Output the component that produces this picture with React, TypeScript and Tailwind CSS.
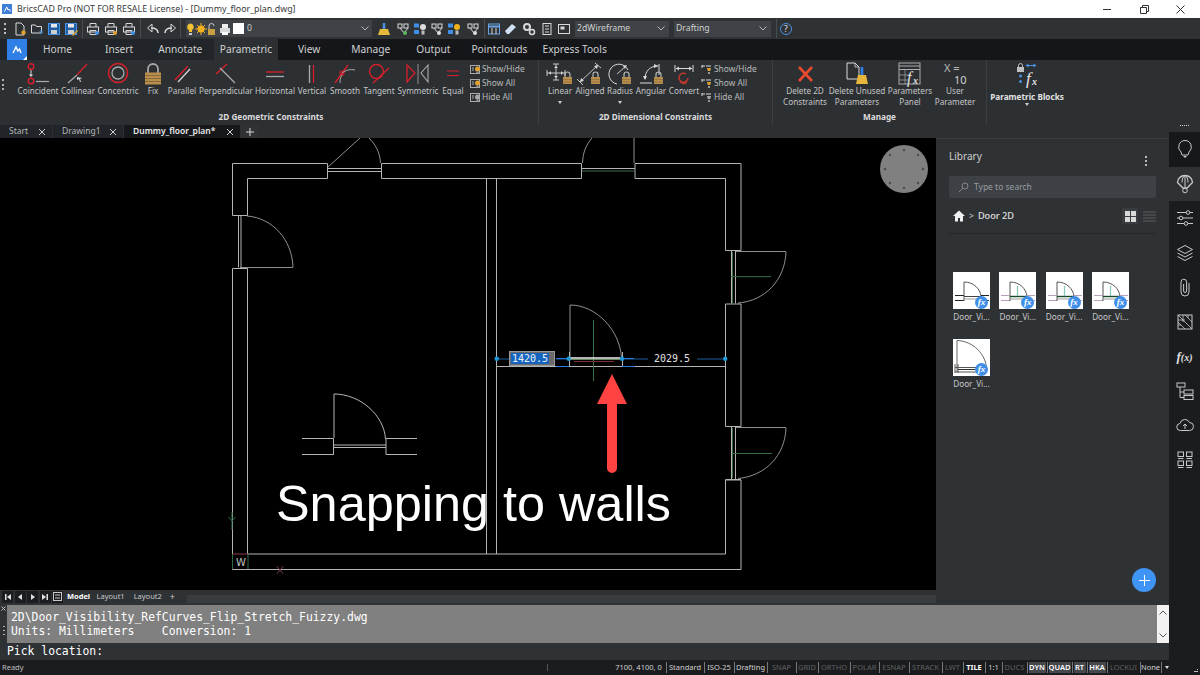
import React from "react";

const G = "#a9abad";
const R = "#d5202b";
const L = "#d9d9d9";

function Sv({ w = 32, h = 24, children, className = "" }: { w?: number; h?: number; children: React.ReactNode; className?: string }) {
  return (
    <svg width={w} height={h} viewBox={`0 0 ${w} ${h}`} fill="none" className={"block shrink-0 overflow-visible " + className}>
      {children}
    </svg>
  );
}

function MiniLock({ x, y }: { x: number; y: number }) {
  return (
    <g>
      <path d={`M${x + 2} ${y + 5}v-2.5a2.5 2.5 0 0 1 5 0v2.5`} stroke="#b9b9b9" strokeWidth="1.2" />
      <rect x={x} y={y + 5} width="9" height="7" fill="#b98d4c" />
      <path d={`M${x} ${y + 7.5}h9M${x} ${y + 10}h9`} stroke="#8a6a38" strokeWidth=".6" />
    </g>
  );
}

const ribbonIcons: Record<string, React.ReactNode> = {
  Coincident: (
    <Sv>
      <circle cx="9" cy="4.5" r="2.8" stroke={R} strokeWidth="1.4" />
      <circle cx="9" cy="19" r="2.8" stroke={R} strokeWidth="1.4" />
      <path d="M9 8v5" stroke={L} />
      <path d="M7 12.5h4l-2 2.5z" fill={L} />
      <path d="M14 19.5h13" stroke={G} strokeWidth="1.2" />
    </Sv>
  ),
  Collinear: (
    <Sv>
      <path d="M25 2 15 13" stroke={R} strokeWidth="1.3" />
      <path d="M15 13 6 21" stroke={G} strokeWidth="1.2" />
      <path d="m15 15 5 1-2 1 1 3-1 0-1-3-2 1z" fill={L} />
    </Sv>
  ),
  Concentric: (
    <Sv>
      <circle cx="16" cy="11" r="9.5" stroke={R} strokeWidth="1.6" />
      <circle cx="16" cy="11" r="6" stroke={G} strokeWidth="1.3" />
    </Sv>
  ),
  Fix: (
    <Sv>
      <path d="M11 11V7a5 5 0 0 1 10 0v4" stroke="#a6a6a6" strokeWidth="1.8" />
      <rect x="8" y="10.5" width="16" height="12" fill="#b98d4c" />
      <path d="M8 13.5h16M8 16.5h16M8 19.5h16" stroke="#7b5f33" strokeWidth=".8" />
    </Sv>
  ),
  Parallel: (
    <Sv>
      <path d="M22 4 9 18" stroke={R} strokeWidth="1.4" />
      <path d="M24 7 12 20" stroke={L} strokeWidth="1.2" />
    </Sv>
  ),
  Perpendicular: (
    <Sv>
      <path d="M17 2 6 12" stroke={R} strokeWidth="1.4" />
      <path d="m10 6 15 15" stroke={G} strokeWidth="1.2" />
    </Sv>
  ),
  Horizontal: (
    <Sv>
      <path d="M7 10h18" stroke={R} strokeWidth="1.3" />
      <path d="M7 14.5h18" stroke={G} strokeWidth="1.3" />
    </Sv>
  ),
  Vertical: (
    <Sv>
      <path d="M13.5 3v18" stroke={G} strokeWidth="1.3" />
      <path d="M17.5 3v18" stroke={R} strokeWidth="1.3" />
    </Sv>
  ),
  Smooth: (
    <Sv>
      <path d="M19 3 6 21" stroke={R} strokeWidth="1.3" />
      <circle cx="13" cy="11" r="2" stroke={R} strokeWidth="1.2" />
      <path d="M13 11c4-3 8-4 13-3" stroke={G} />
      <path d="M13 13c-2 3-2 6-2 8" stroke={G} />
    </Sv>
  ),
  Tangent: (
    <Sv>
      <circle cx="13.5" cy="9.5" r="7" stroke={R} strokeWidth="1.4" />
      <path d="M26 6 10 21" stroke={R} strokeWidth="1.3" />
    </Sv>
  ),
  Symmetric: (
    <Sv>
      <path d="M5 3 13 11 5 20z" stroke={R} strokeWidth="1.3" />
      <path d="M16 2v20" stroke={G} strokeWidth=".8" />
      <path d="M26 3 19 11 26 20z" stroke={G} strokeWidth="1.1" />
    </Sv>
  ),
  Equal: (
    <Sv>
      <path d="M10 9h12M10 13.5h12" stroke={R} strokeWidth="1.1" />
    </Sv>
  ),
  Linear: (
    <Sv>
      <path d="M3 11h18M12 2v16M9 2h6M9 18h6M3 8v6M21 8v6" stroke={L} strokeWidth=".9" />
      <path d="M12 4l-2 2h4zM12 16l-2-2h4zM5 11l2-2v4zM19 11l-2-2v4z" fill={L} />
      <MiniLock x={19} y={10} />
    </Sv>
  ),
  Aligned: (
    <Sv>
      <path d="M6 20 24 3M3 17l6 6M21 1l6 5" stroke={L} strokeWidth=".9" />
      <path d="m6 20 4-1-3-3zM24 3l-4 1 3 3z" fill={L} />
      <MiniLock x={17} y={10} />
    </Sv>
  ),
  Radius: (
    <Sv>
      <path d="M13 22A10 10 0 1 1 24 8" stroke={L} strokeWidth="1" />
      <path d="m13 12 9-8" stroke={L} strokeWidth=".9" />
      <path d="m23 3-4 1 2 3z" fill={L} />
      <MiniLock x={18} y={10} />
    </Sv>
  ),
  Angular: (
    <Sv>
      <path d="M5 21h12M24 2v11" stroke={L} strokeWidth="1" />
      <path d="M10 17C10 9 15 4 23 4" stroke={L} strokeWidth="1" />
      <path d="m10 18-2-4h4zM23 4l-4-2v4z" fill={L} />
      <MiniLock x={19} y={10} />
    </Sv>
  ),
  Convert: (
    <Sv>
      <path d="M7 3v7M25 3v7M8 6.5h16" stroke={L} strokeWidth="1" />
      <path d="m8 6.5 3-2v4zM24 6.5l-3-2v4z" fill={L} />
      <path d="M20 16a4.5 4.5 0 1 1-2-4" stroke="#c8392e" strokeWidth="1.4" />
      <path d="M12 19a4 4 0 0 0 7 1" stroke="#c8392e" strokeWidth="1.2" />
    </Sv>
  ),
  "Delete 2D": (
    <Sv>
      <path d="m10 5 13 14M23 5 10 19" stroke="#e8492f" strokeWidth="2.6" />
    </Sv>
  ),
  "Delete Unused": (
    <Sv>
      <path d="M6 1h8l4 4v12H6z" stroke={L} strokeWidth="1" />
      <path d="M14 1v4h4" stroke={L} strokeWidth=".8" />
      <path d="M21 5v8" stroke="#2f7fe6" strokeWidth="2.6" />
      <path d="M17 13h8l2 9H15z" fill="#e6b73d" />
    </Sv>
  ),
  Parameters: (
    <Sv>
      <rect x="5" y="1" width="21" height="21" stroke={G} />
      <path d="M5 4h21M5 7.5h21" stroke={G} />
      <path d="M5 13h12M5 18h10M11 8v14" stroke={G} strokeWidth=".7" />
      <text x="13" y="21" fill="#e0e0e0" fontFamily="Liberation Serif" fontStyle="italic" fontSize="16">f</text>
      <text x="19" y="22" fill="#e0e0e0" fontFamily="Liberation Serif" fontStyle="italic" fontWeight="700" fontSize="10">x</text>
    </Sv>
  ),
  User: (
    <Sv>
      <text x="5" y="10" fill="#b8b8b8" fontFamily="Noto Sans" fontSize="11">X =</text>
      <text x="15" y="22" fill="#d0d0d0" fontFamily="Noto Sans" fontSize="11">10</text>
    </Sv>
  ),
  Blocks: (
    <Sv>
      <rect x="6" y="5" width="7" height="5" fill="#c0c0c0" />
      <path d="M7.5 5V3.5a2 2 0 0 1 4 0V5" stroke="#c0c0c0" />
      <path d="M16 3.5h8" stroke="#4a90e2" strokeWidth="1" />
      <path d="m14.5 3.5 3-2v4zM25.5 3.5l-3-2v4z" fill="#4a90e2" />
      <circle cx="9.5" cy="14" r="1.5" fill="#4a90e2" />
      <circle cx="9.5" cy="19.5" r="1.5" fill="#4a90e2" />
      <text x="15" y="22" fill="#e6e6e6" fontFamily="Liberation Serif" fontStyle="italic" fontSize="17">f</text>
      <text x="21" y="23" fill="#e6e6e6" fontFamily="Liberation Serif" fontStyle="italic" fontWeight="700" fontSize="10">x</text>
    </Sv>
  ),
};

function RItem({ k, w, lines, caret }: { k: string; w: string; lines: string[]; caret?: boolean }) {
  return (
    <div className={"flex flex-col items-center pt-[2px] " + w}>
      {ribbonIcons[k]}
      <div className="-mt-px flex flex-col items-center text-[8.2px] leading-[11.4px] text-[#c4c5c6] whitespace-nowrap">
        {lines.map((l) => (
          <span key={l}>{l}</span>
        ))}
      </div>
      {caret && <span className="mt-[5px] h-0 w-0 border-x-[2.5px] border-t-[3px] border-x-transparent border-t-[#d0d0d0]" />}
    </div>
  );
}

function SmallRow({ label, dim, on = true }: { label: string; dim?: boolean; on?: boolean }) {
  return (
    <div className="flex h-[14px] items-center">
      <Sv w={11} h={11} className="mr-[1px]">
        {dim ? (
          <>
            <path d="M0 2h3M0 1v3M9 2H4" stroke={L} />
            <path d="M5 4h4l-.8 3H5.800z" fill={on ? "#e0a030" : "#a8a8a8"} />
            <rect x="6" y="8" width="2" height="2" fill="#999" />
          </>
        ) : (
          <>
            <rect x=".5" y="1.500" width="9" height="8" stroke={G} />
            <path d="M2 4h2M2 6h2" stroke={G} />
            <circle cx="7.500" cy="5" r="2.500" fill={on ? "#e0a030" : "#a8a8a8"} />
            <rect x="6.500" y="7.500" width="2" height="2" fill="#999" />
          </>
        )}
      </Sv>
      <span className="text-[8.4px] leading-none text-[#b9babb]">{label}</span>
    </div>
  );
}

function SmallCol({ dim, w }: { dim?: boolean; w: string }) {
  return (
    <div className={"flex flex-col pt-[2px] " + w}>
      <SmallRow label="Show/Hide" dim={dim} />
      <SmallRow label="Show All" dim={dim} />
      <SmallRow label="Hide All" dim={dim} on={false} />
    </div>
  );
}

function PanelTitle({ children }: { children: React.ReactNode }) {
  return <div className="absolute bottom-[3px] left-0 right-0 text-center text-[8.2px] font-bold leading-[11px] text-[#dcdcdc]">{children}</div>;
}

function Tb({ children, cls = "" }: { children: React.ReactNode; cls?: string }) {
  return <span className={"flex h-4 w-4 shrink-0 items-center justify-center " + cls}>{children}</span>;
}

const Sep = ({ cls = "" }: { cls?: string }) => <span className={"h-[19px] w-px shrink-0 bg-[#4a4d50] " + cls} />;

function Printer({ dot = "#3f8fe8" }: { dot?: string }) {
  return (
    <Sv w={14} h={14}>
      <path d="M4 5V1.500h6V5" stroke={L} />
      <rect x="1.500" y="5" width="11" height="5" stroke={L} />
      <path d="M4 8.500h6v4H4z" stroke={L} />
      <circle cx="11" cy="11" r="2" fill={dot} />
    </Sv>
  );
}

const DocIcon = ({ c = "#e0a030" }: { c?: string }) => (
  <Sv w={14} h={14}>
    <path d="M3 1h5l3 3v9H3z" stroke={L} />
    <circle cx="10.500" cy="10.500" r="2.200" fill={c} />
  </Sv>
);

function Save({ y }: { y?: boolean }) {
  return (
    <Sv w={14} h={14}>
      <rect x="1.500" y="1.500" width="11" height="11" fill="#1e5fa8" stroke="#4a90e2" />
      <rect x="4" y="2" width="6" height="3.500" fill="#e8e8e8" />
      <rect x="4" y="8" width="6" height="4" fill="#cfcfcf" />
      {y && <path d="m8 13 5-5 1 1-5 5z" fill="#e0a030" />}
    </Sv>
  );
}

function Chevron() {
  return (
    <svg width="8" height="5" viewBox="0 0 8 5" className="shrink-0" fill="none">
      <path d="m.5.500 3.500 3.500L7.500.500" stroke="#b5b5b5" />
    </svg>
  );
}

function Toolbar() {
  return (
    <div className="flex h-[21px] items-center bg-[#2f3235] pl-[4px]">
      <span className="flex h-[11px] w-[8px] shrink-0 flex-col justify-between">
        <i className="h-[2px] w-[2px] bg-[#c0c0c0]" />
        <i className="h-[2px] w-[2px] bg-[#c0c0c0]" />
        <i className="h-[2px] w-[2px] bg-[#c0c0c0]" />
      </span>
      <Tb><DocIcon /></Tb>
      <Tb cls="ml-px">
        <Sv w={14} h={14}>
          <path d="M1.500 3h4l1 1.500h5V11h-10z" stroke={L} />
          <path d="M9 10h4M11 8v4" stroke="#4a90e2" />
        </Sv>
      </Tb>
      <Tb cls="ml-px"><Save /></Tb>
      <Tb cls="ml-px"><Save y /></Tb>
      <Sep cls="ml-[3px]" />
      <Tb cls="ml-[2px]"><Printer /></Tb>
      <Tb cls="ml-[2px]"><Printer dot="#e0a030" /></Tb>
      <Tb cls="ml-[1.500px]"><Printer /></Tb>
      <Sep cls="ml-[3px]" />
      <Tb cls="ml-[4.500px]">
        <Sv w={14} h={14}>
          <path d="M12 11c0-4-3-5-7-5" stroke={L} strokeWidth="1.500" />
          <path d="M6 2 1.500 6 6 10z" stroke={L} />
        </Sv>
      </Tb>
      <Tb cls="ml-px">
        <Sv w={14} h={14}>
          <path d="M2 11c0-4 3-5 7-5" stroke={L} strokeWidth="1.500" />
          <path d="M8 2l4.500 4L8 10z" stroke={L} />
        </Sv>
      </Tb>
      <Sep cls="ml-[2px]" />
      <div className="ml-[5px] flex h-[17px] w-[186px] shrink-0 items-center bg-[#3f4347] pl-[0px] pr-[3px]">
        <Sv w={46} h={14}>
          <path d="M4 1.500a3.500 3.500 0 0 1 2 6.500v2H3V8a3.500 3.500 0 0 1 1-6.500z" fill="#f2c230" />
          <rect x="3" y="11" width="3" height="2" fill="#ccc" />
          <circle cx="15" cy="7" r="3.500" fill="#f2b01e" />
          <path d="M15 1v12M9 7h12M11 3l8 8M19 3l-8 8" stroke="#f2b01e" />
          <rect x="22" y="7" width="7" height="6" fill="#c8a040" />
          <path d="M23 7V4a2.500 2.500 0 0 1 5 0" stroke="#ccc" />
          <rect x="34" y="6" width="10" height="5" fill="#d8d8d8" />
          <rect x="36" y="2" width="6" height="4" fill="#eee" />
          <rect x="36" y="10" width="6" height="3" fill="#fff" />
        </Sv>
        <span className="ml-px h-[11px] w-[11px] bg-white" />
        <span className="ml-[3px] flex-1 text-[8.500px] leading-none text-[#d0d0d0]">0</span>
        <Chevron />
      </div>
      <Tb cls="ml-[4px]">
        <Sv w={14} h={14}>
          <path d="M7 1v6" stroke="#4a90e2" strokeWidth="2.500" />
          <path d="M3 7h8l2 6H1z" fill="#e6b73d" />
        </Sv>
      </Tb>
      {[0, 1, 2, 3, 4].map((i) => (
        <Tb key={i} cls={i === 0 ? "ml-[3px]" : i === 4 ? "ml-[3px]" : "ml-px"}>
          <Sv w={14} h={14}>
            {i % 2 === 0 ? (
              <>
                <rect x="2" y="2" width="4" height="4" stroke={L} />
                <rect x="8" y="2" width="4" height="4" stroke={L} />
                <path d="M4 6l4 5M12 6l-4 5" stroke={L} />
                <circle cx="9" cy="11" r="2" fill={i === 0 ? "#5cb85c" : "#ddd"} />
              </>
            ) : (
              <>
                <rect x="1" y="1.500" width="5" height="4" fill="#3f8fe8" />
                <rect x="1" y="8" width="5" height="4" fill="#3f8fe8" />
                <circle cx="10" cy="5" r="3" fill={i === 3 ? "#f2b01e" : "#ddd"} />
                <rect x="8.500" y="8.500" width="3" height="4" fill="#bbb" />
              </>
            )}
          </Sv>
        </Tb>
      ))}
      <Sep cls="ml-[3px]" />
      <Tb cls="ml-[1px]">
        <Sv w={14} h={14}>
          <rect x="1.500" y="2" width="11" height="10" stroke="#6aa5e8" />
          <path d="M1.500 4.500h11" stroke="#6aa5e8" strokeWidth="2" />
          <path d="M5 6v6M9 6v6" stroke={L} />
        </Sv>
      </Tb>
      <Tb cls="ml-px">
        <Sv w={14} h={14}>
          <path d="m1 9 7-7 4 3-7 7H3z" fill="#cfe0f0" />
        </Sv>
      </Tb>
      <Tb cls="ml-[2px]">
        <Sv w={14} h={14}>
          <circle cx="5" cy="5" r="3" stroke={L} strokeWidth="2" />
          <circle cx="10" cy="10" r="2.500" stroke={L} strokeWidth="1.500" />
        </Sv>
      </Tb>
      <Tb cls="ml-[2px]">
        <Sv w={14} h={14}>
          <rect x="3" y="1.500" width="8" height="11" stroke={L} />
          <path d="M5 4h4M5 7h4M5 10h4" stroke={L} />
        </Sv>
      </Tb>
      <Tb cls="ml-px">
        <Sv w={14} h={14}>
          <rect x="1.500" y="2.500" width="11" height="9" stroke={L} />
          <rect x="3.500" y="4.500" width="4" height="3" fill={L} />
        </Sv>
      </Tb>
      <div className="ml-[3px] flex h-[16px] w-[94px] shrink-0 items-center justify-between bg-[#3f4347] pl-[2px] pr-[4px] text-[8.700px] text-[#d0d0d0]">
        2dWireframe
        <Chevron />
      </div>
      <div className="ml-[5px] flex h-[16px] w-[97px] shrink-0 items-center justify-between bg-[#3f4347] pl-[2px] pr-[4px] text-[8.700px] text-[#d0d0d0]">
        Drafting
        <Chevron />
      </div>
      <Sep cls="ml-[5px]" />
      <Tb cls="ml-[1px]">
        <Sv w={14} h={14}>
          <circle cx="7" cy="7" r="5.500" stroke="#4a90e2" />
          <text x="5" y="10" fontSize="8.500" fontFamily="Noto Sans" fill="#e0e0e0">?</text>
        </Sv>
      </Tb>
    </div>
  );
}

function TabBar() {
  return (
    <div className="flex h-[21px] items-stretch bg-[#14161a] text-[10.200px] leading-[21px] text-[#cfd0d1]">
      <div className="flex w-[214px] items-stretch bg-[#212428] pl-[7px]">
        <div className="relative flex h-[21px] w-[20px] items-center justify-center bg-[#2f7fe6]">
          <Sv w={10} h={8}>
            <path d="M1 7 4 1l1.800 4L7.500 3 9 7" stroke="#fff" strokeWidth="1.400" />
          </Sv>
          <span className="absolute bottom-0 right-0 h-0 w-0 border-b-[4px] border-l-[4px] border-b-white border-l-transparent" />
        </div>
        <span className="ml-[16px]">Home</span>
        <span className="ml-[33px]">Insert</span>
        <span className="ml-[25px]">Annotate</span>
      </div>
      <span className="w-[64px] bg-[#2d3033] text-center">Parametric</span>
      <span className="ml-[20px]">View</span>
      <span className="ml-[31px]">Manage</span>
      <span className="ml-[26px]">Output</span>
      <span className="ml-[21px]">Pointclouds</span>
      <span className="ml-[15px]">Express Tools</span>
    </div>
  );
}

function Ribbon() {
  return (
    <div className="flex h-[65px] items-stretch bg-[#2d3033]">
      <div className="relative flex w-[539px] shrink-0 border-r border-[#3c3f42] pl-[18px]">
        <span className="absolute left-[2px] top-[19px] flex h-[11px] flex-col justify-between">
          <i className="h-[2px] w-[2px] bg-[#b0b0b0]" />
          <i className="h-[2px] w-[2px] bg-[#b0b0b0]" />
          <i className="h-[2px] w-[2px] bg-[#b0b0b0]" />
        </span>
        <RItem k="Coincident" w="w-[40px]" lines={["Coincident"]} />
        <RItem k="Collinear" w="w-[40px]" lines={["Collinear"]} />
        <RItem k="Concentric" w="w-[40px]" lines={["Concentric"]} />
        <RItem k="Fix" w="w-[30px]" lines={["Fix"]} />
        <RItem k="Parallel" w="w-[28px]" lines={["Parallel"]} />
        <RItem k="Perpendicular" w="w-[60px]" lines={["Perpendicular"]} />
        <RItem k="Horizontal" w="w-[38px]" lines={["Horizontal"]} />
        <RItem k="Vertical" w="w-[36px]" lines={["Vertical"]} />
        <RItem k="Smooth" w="w-[30px]" lines={["Smooth"]} />
        <RItem k="Tangent" w="w-[38px]" lines={["Tangent"]} />
        <RItem k="Symmetric" w="w-[40px]" lines={["Symmetric"]} />
        <RItem k="Equal" w="w-[30px]" lines={["Equal"]} />
        <div className="ml-[2px]"><SmallCol w="w-[60px]" /></div>
        <PanelTitle><span className="relative left-[2px]">2D Geometric Constraints</span></PanelTitle>
      </div>
      <div className="relative flex w-[234px] shrink-0 border-r border-[#3c3f42] pl-[5px]">
        <RItem k="Linear" w="w-[32px]" lines={["Linear"]} caret />
        <RItem k="Aligned" w="w-[28px]" lines={["Aligned"]} />
        <RItem k="Radius" w="w-[32px]" lines={["Radius"]} caret />
        <RItem k="Angular" w="w-[30px]" lines={["Angular"]} />
        <RItem k="Convert" w="w-[36px]" lines={["Convert"]} />
        <SmallCol dim w="w-[60px]" />
        <PanelTitle>2D Dimensional Constraints</PanelTitle>
      </div>
      <div className="relative flex w-[214px] shrink-0 border-r border-[#3c3f42] pl-[9px]">
        <RItem k="Delete 2D" w="w-[46px]" lines={["Delete 2D", "Constraints"]} />
        <RItem k="Delete Unused" w="w-[58px]" lines={["Delete Unused", "Parameters"]} />
        <RItem k="Parameters" w="w-[48px]" lines={["Parameters", "Panel"]} />
        <RItem k="User" w="w-[42px]" lines={["User", "Parameter"]} />
        <PanelTitle>Manage</PanelTitle>
      </div>
      <div className="flex w-[80px] flex-col items-center pt-[2px]">
        {ribbonIcons.Blocks}
        <span className="mt-[5px] whitespace-nowrap text-[8.200px] font-bold leading-[11px] text-[#e2e2e2]">Parametric Blocks</span>
        <span className="mt-[1px] h-0 w-0 border-x-[2.500px] border-t-[3px] border-x-transparent border-t-[#d0d0d0]" />
      </div>
    </div>
  );
}

function DocTab({ label, active, w }: { label: string; active?: boolean; w: string }) {
  return (
    <div className={"flex h-[13px] items-center justify-between pl-[9px] pr-[6px] " + w + (active ? " bg-[#17181b] font-semibold text-[#e8e8e8]" : " bg-[#212428] text-[#b5b6b7]")}>
      <span>{label}</span>
      <svg width="8" height="8" viewBox="0 0 8 8" fill="none">
        <path d="m1 1 6 6M7 1 1 7" stroke="#d0d0d0" />
      </svg>
    </div>
  );
}

function DocTabs() {
  return (
    <div className="flex h-[13px] items-stretch gap-px bg-[#2d3033] text-[8.500px] leading-none">
      <DocTab label="Start" w="w-[52px]" />
      <DocTab label="Drawing1" w="w-[70px]" />
      <DocTab label="Dummy_floor_plan*" w="w-[116px]" active />
      <div className="flex w-[18px] items-center justify-center bg-[#303336]">
        <svg width="8" height="8" viewBox="0 0 8 8" fill="none">
          <path d="M4 0v8M0 4h8" stroke="#d8d8d8" />
        </svg>
      </div>
    </div>
  );
}

function Drawing() {
  const W = "#b4b4b4";
  return (
    <svg viewBox="0 138 936 452" className="block h-full w-full" fill="none">
      <g stroke={W} strokeWidth="1">
        {/* top-left wall */}
        <path d="M232.500 215.500V163.500H327.500V178.500H247.500V215.500H232.500" />
        {/* top door */}
        <path d="M328 168.500H381M328 171.500H381" />
        <path d="M328 167 360 138M369 138C375 144 380 152 380.500 163" strokeWidth=".8" />
        <path d="M581.500 163.500H381.500V178.500H581.500V163.500" />
        <path d="M635 163.500H741V250.500H725.500V178.500H635V163.500" />
        {/* upper door */}
        <path d="M582 168.500H635" />
        <path d="M634 163V138M582.500 163C583 152 586 145 592 138" strokeWidth=".8" />
        {/* left door */}
        <path d="M238.500 215.500V267.500M241 215.500V267.500" />
        <path d="M240 267.500H293M247 216C273 218 292 240 293 267" strokeWidth=".8" />
        {/* left lower wall */}
        <path d="M232.500 268.500V569.500H741V480H725.500V554H247.500V268.500H232.500" />
        {/* interior */}
        <path d="M486.500 178.500V554M496.500 178.500V554" />
        {/* right door 1 */}
        <path d="M731.500 251V303.500M735.500 251V303.500" />
        <path d="M735 251.500H786M786 252C785 280 765 301 738 303" strokeWidth=".8" />
        <path d="M725.500 304V426.500H741V304H725.500" />
        {/* right door 2 */}
        <path d="M731.500 427V479M735.500 427V479" />
        <path d="M735 427.500H786M786 428C785 456 765 476 738 478.500" strokeWidth=".8" />
        <path d="M725.500 479.500H741" />
        {/* center partition */}
        <path d="M497 366.500H725.500" />
        {/* placed door */}
        <path d="M570 358V305C596 305 620 330 621.500 358" strokeWidth=".8" />
        <path d="M569.500 352V366M622.500 352V366" />
        {/* lower-left door */}
        <path d="M334 438V394C360 394 384 415 385.500 439" />
        <path d="M302 438.500H333.500V454.500H302M417 438.500H386V454.500H417M333 445H386M333 447.500H386" />
      </g>
      <g stroke="#3a7048">
        <path d="M732.500 252V303M731 276.700H771M732.500 428V478M732 453.500H772" />
        <path d="M593.500 320V381" />
        <path d="M582 171H634" />
      </g>
      <path d="M570 358H620" stroke="#f2f2f2" strokeWidth="1.600" />
      <path d="M570 359.500H620" stroke="#7fb07f" strokeWidth=".8" />
      <path d="M574 361.500H614" stroke="#7a3030" />
      {/* dim lines */}
      <g stroke="#1f5f9c" strokeWidth="1">
        <path d="M497 359H509M556 359H569M622 359H648M697 359H725" />
      </g>
      <path d="M556 358.500H569M556 366.500H569M622 366.500H635M622 358.500H634" stroke="#2a7ae2" strokeWidth="1" />
      <g fill="#1d9bd8">
        <circle cx="496.700" cy="358.700" r="2.200" />
        <circle cx="568.700" cy="358.700" r="2.200" />
        <circle cx="622" cy="358.700" r="2.200" />
        <circle cx="725.200" cy="358.700" r="2.200" />
      </g>
      {/* UCS */}
      <path d="M232 530V512M228.500 517 232 521 235.500 517" stroke="#2f6a48" />
      <path d="M232.500 554H248" stroke="#8a3a4a" />
      <path d="M232.500 554V569M248 554V569" stroke="#2f6a48" />
      <text x="236" y="566" fontFamily="DejaVu Sans" fontSize="10" fill="#c0c0c0">W</text>
      <path d="m276.500 566 7 8M283.500 566l-7 8" stroke="#7a3a4a" />
      {/* arrow */}
      <path d="M612 374 627 404H617V468a5 5 0 0 1-10 0V404H597Z" fill="#ff4343" />
      {/* nav wheel */}
      <circle cx="904" cy="169" r="24" fill="#808080" />
      <g fill="#4a4a4a">
        <circle cx="904" cy="150" r="1.200" />
        <circle cx="918" cy="155" r="1.200" />
        <circle cx="923" cy="169" r="1.200" />
        <circle cx="918" cy="183" r="1.200" />
        <circle cx="904" cy="188" r="1.200" />
        <circle cx="890" cy="183" r="1.200" />
        <circle cx="885" cy="169" r="1.200" />
        <circle cx="890" cy="155" r="1.200" />
      </g>
    </svg>
  );
}

function Canvas() {
  return (
    <div className="relative min-h-0 flex-1 overflow-hidden bg-black">
      <Drawing />
      <div className="absolute left-[509px] top-[213px] flex h-[15px] w-[46px] items-center border border-[#9a9a9a] bg-[#6a6a6a] pl-px">
        <span className="flex h-[11px] w-[38px] items-center justify-center bg-[#1565c0] font-['DejaVu_Sans_Mono',monospace] text-[10px] leading-none text-[#f0f0f0]">1420.5</span>
      </div>
      <span className="absolute left-[654px] top-[214px] font-['DejaVu_Sans_Mono',monospace] text-[10px] leading-[13px] text-[#e0e0e0]">2029.5</span>
      <span className="absolute left-[276px] top-[337px] whitespace-nowrap font-['Liberation_Sans',sans-serif] text-[50.400px] leading-[58px] text-white">Snapping to walls</span>
    </div>
  );
}

function NavBtn({ d }: { d: string }) {
  return (
    <span className="flex h-[12px] w-[11px] items-center justify-center bg-[#1c1d20]">
      <svg width="8" height="8" viewBox="0 0 8 8" fill="#e0e0e0">
        <path d={d} />
      </svg>
    </span>
  );
}

function LayoutTabs() {
  return (
    <div className="flex h-[13px] shrink-0 items-center bg-[#2f3235] pl-[2px] text-[7.500px] leading-none text-[#c8c8c8]">
      <div className="flex gap-[1.500px]">
        <NavBtn d="M1 1h1.500v6H1zM7 1v6L3 4z" />
        <NavBtn d="M6 1v6L2 4z" />
        <NavBtn d="M2 1v6l4-3z" />
        <NavBtn d="M1 1v6l4-3zM5.500 1H7v6H5.500z" />
      </div>
      <span className="ml-px flex h-[12px] w-[11px] items-center justify-center bg-[#1c1d20]">
        <svg width="9" height="9" viewBox="0 0 9 9" fill="none">
          <rect x=".5" y=".5" width="8" height="8" stroke="#c8c8c8" />
          <path d="M2 3h5M2 6h5" stroke="#c8c8c8" />
        </svg>
      </span>
      <span className="ml-[4px] w-[24px] text-center font-bold text-white">Model</span>
      <span className="ml-[6px]">Layout1</span>
      <span className="ml-[9px]">Layout2</span>
      <span className="ml-[8px] text-[9px]">+</span>
      <div className="ml-[12px] h-[8px] flex-1 self-end bg-[#3a3d40]" />
    </div>
  );
}

function Command() {
  return (
    <div className="flex h-[57px] items-stretch bg-[#2f3235]">
      <div className="flex w-[7px] shrink-0 flex-col items-center pt-[3px]">
        <svg width="5" height="5" viewBox="0 0 5 5" fill="none">
          <path d="m.5.5 4 4M4.500.5l-4 4" stroke="#c0c0c0" />
        </svg>
        <span className="mt-[15px] flex h-[9px] flex-col justify-between">
          <i className="h-px w-[2px] bg-[#b0b0b0]" />
          <i className="h-px w-[2px] bg-[#b0b0b0]" />
          <i className="h-px w-[2px] bg-[#b0b0b0]" />
        </span>
      </div>
      <div className="flex flex-1 flex-col">
        <div className="mt-[2px] flex h-[38px] items-stretch">
          <div className="flex-1 bg-[#808080] pl-[4px] pt-[5px] font-['DejaVu_Sans_Mono',monospace] text-[11.400px] leading-[14.300px] text-white">
            <div>2D\Door_Visibility_RefCurves_Flip_Stretch_Fuizzy.dwg</div>
            <div className="whitespace-pre">Units: Millimeters    Conversion: 1</div>
          </div>
          <div className="flex w-[12px] flex-col items-center justify-between bg-[#f2f2f2] py-[5px]">
            <svg width="8" height="5" viewBox="0 0 8 5" fill="none">
              <path d="m.5 4.500 3.500-3.500L7.500 4.500" stroke="#555" />
            </svg>
            <svg width="8" height="5" viewBox="0 0 8 5" fill="none">
              <path d="m.5.5 3.500 3.500L7.500.5" stroke="#555" />
            </svg>
          </div>
        </div>
        <div className="-ml-[7px] flex flex-1 items-center pl-[7px] font-['DejaVu_Sans_Mono',monospace] text-[11.400px] leading-none text-white">Pick location:</div>
      </div>
    </div>
  );
}

function Thumb({ big, line = "#222", tint, label = "Door_Vi..." }: { big?: boolean; line?: string; tint?: boolean; label?: string }) {
  return (
    <div className="flex w-[37px] flex-col items-center">
      <div className="relative h-[37px] w-[37px] bg-white">
        {big ? (
          <svg viewBox="0 0 37 37" className="h-full w-full" fill="none">
            <path d="M4 33V1.500C20 2 33 15 33.500 30" stroke="#666" />
            <path d="M2 28.500H34M2 33H34M2 25v9M5 25v9" stroke="#555" />
            <path d="M5 30.500H33" stroke="#333" />
          </svg>
        ) : (
          <svg viewBox="0 0 37 37" className="h-full w-full" fill="none">
            <path d="M11 24V10C21 10 27 17 28 24" stroke="#555" />
            <path d="M2 23.500H11M28 23.500H36M2 28.500H11M28 28.500H36" stroke={tint ? "#b8a0b8" : line} />
            <path d="M11 24V29M28 24V29" stroke="#555" />
            <path d="M11 24.500H28" stroke={tint ? "#164a28" : "#444"} strokeWidth={tint ? 1.400 : 1} />
            {tint && <path d="M18.500 14V24" stroke="#88c8b8" strokeWidth="1.300" />}
            <path d="M11 27H28" stroke="#999" />
          </svg>
        )}
        <span className="absolute bottom-0 right-[2px] flex h-[13px] w-[13px] items-center justify-center rounded-full bg-[#3f8fe8] font-['Liberation_Serif',serif] text-[9px] font-bold italic leading-none text-white">
          fx
        </span>
      </div>
      <span className="mt-[2px] whitespace-nowrap text-[8.200px] leading-[12px] text-[#c8c8c8]">{label}</span>
    </div>
  );
}

function Library() {
  return (
    <div className="relative flex w-[233px] shrink-0 flex-col border-t border-[#3a3d40] bg-[#2f3235] pl-[13px] pr-[13px]">
      <div className="flex h-[37px] items-center justify-between pb-[2px]">
        <span className="text-[10px] text-[#cfcfcf]">Library</span>
        <span className="mr-[9px] mt-[8px] flex flex-col gap-[2px]">
          <i className="h-[2px] w-[2px] rounded-full bg-[#e8e8e8]" />
          <i className="h-[2px] w-[2px] rounded-full bg-[#e8e8e8]" />
          <i className="h-[2px] w-[2px] rounded-full bg-[#e8e8e8]" />
        </span>
      </div>
      <div className="flex h-[22px] items-center rounded-[2px] bg-[#3d4146] pl-[9px] text-[8.500px] text-[#9a9da0]">
        <svg width="11" height="11" viewBox="0 0 11 11" fill="none" className="mr-[5px]">
          <circle cx="7" cy="4" r="3" stroke="#85888b" />
          <path d="M4.800 6.200 1 10" stroke="#85888b" />
        </svg>
        Type to search
      </div>
      <div className="flex h-[36px] items-center border-b border-[#26282a] pl-[4px] pt-[1px]">
        <svg width="12" height="12" viewBox="0 0 12 12">
          <path d="M6 .5 0 6h2v5.500h3V8h2v3.500h3V6h2z" fill="#f0f0f0" />
        </svg>
        <span className="ml-[4px] text-[8.500px] text-[#d0d0d0]">&gt;</span>
        <span className="ml-[4px] text-[9.200px] font-medium text-[#e0e0e0]">Door 2D</span>
        <span className="ml-auto mr-[2px] flex h-[16px] w-[16px] items-center justify-center bg-[#383b3f]">
          <svg width="11" height="11" viewBox="0 0 11 11" fill="#d8d8d8">
            <rect width="5" height="5" />
            <rect x="6" width="5" height="5" />
            <rect y="6" width="5" height="5" />
            <rect x="6" y="6" width="5" height="5" />
          </svg>
        </span>
        <svg width="13" height="11" viewBox="0 0 13 11" fill="none" className="ml-[3px]">
          <path d="M0 1h13M0 4h13M0 7h13M0 10h13" stroke="#5c5f62" />
        </svg>
      </div>
      <div className="mt-[38px] grid w-[190px] grid-cols-[37px_37px_37px_37px] gap-x-[9.300px] gap-y-[16px] pl-[4px]">
        <Thumb />
        <Thumb tint />
        <Thumb tint />
        <Thumb tint />
        <Thumb big />
      </div>
      <span className="absolute left-[196px] top-[429px] flex h-6 w-6 items-center justify-center rounded-full bg-[#3f94f5]">
        <svg width="11" height="11" viewBox="0 0 11 11" fill="none">
          <path d="M5.500 0v11M0 5.500h11" stroke="#fff" />
        </svg>
      </span>
    </div>
  );
}

function SI({ children, active, dark }: { children: React.ReactNode; active?: boolean; dark?: boolean }) {
  return (
    <div className={"flex h-[34.500px] w-full items-center justify-center " + (active ? "bg-[#2f3235]" : dark ? "bg-[#17181a]" : "")}>
      {children}
    </div>
  );
}

function RightStrip() {
  const s = { stroke: "#c8c8c8", strokeWidth: 1 };
  return (
    <div className="flex w-[31px] shrink-0 flex-col bg-[#1b1c1e]">
      <div className="flex h-[7px] items-start justify-center bg-[#2d3033] text-[0px]">
        <i className="h-px w-[9px] border-t border-dotted border-[#d0d0d0]" />
      </div>
      <SI dark>
        <Sv w={18} h={20}>
          <path d="M9 1.500a6.500 6.500 0 0 1 4 11.500l-1 3H6l-1-3A6.500 6.500 0 0 1 9 1.500z" {...s} />
          <path d="M7 17h4l-2 2z" fill="#c8c8c8" />
        </Sv>
      </SI>
      <SI active>
        <Sv w={18} h={20}>
          <path d="M1.500 8.500a7.500 7 0 0 1 15 0L11 14H7z" {...s} strokeWidth="1.400" />
          <path d="M6 8.500C6 5 7 2.500 9 1.500c2 1 3 3.500 3 7M9 1.500v12" {...s} />
          <circle cx="9" cy="16.500" r="2.300" {...s} />
        </Sv>
      </SI>
      <SI>
        <Sv w={18} h={18}>
          <path d="M1 3.500h16M1 9h16M1 14.500h16" {...s} />
          <circle cx="12" cy="3.500" r="1.800" fill="#1b1c1e" {...s} />
          <circle cx="5" cy="9" r="1.800" fill="#1b1c1e" {...s} />
          <circle cx="10" cy="14.500" r="1.800" fill="#1b1c1e" {...s} />
        </Sv>
      </SI>
      <SI>
        <Sv w={18} h={18}>
          <path d="M9 1.500 1.500 5.500 9 9.500l7.500-4zM1.500 9 9 13l7.500-4M1.500 12.500 9 16.500l7.500-4" {...s} />
        </Sv>
      </SI>
      <SI>
        <Sv w={14} h={20}>
          <path d="M11 6v9a4 4 0 0 1-8 0V5a2.800 2.800 0 0 1 5.600 0v9a1.500 1.500 0 0 1-3 0V7" {...s} />
        </Sv>
      </SI>
      <SI>
        <Sv w={18} h={18}>
          <rect x="2" y="2" width="14" height="14" {...s} />
          <path d="M2 7h7M2 12h3M7 2v7M12 2v3M2 2l14 14M9 2l7 7M2 9l7 7" {...s} strokeWidth=".8" />
        </Sv>
      </SI>
      <SI>
        <span className="whitespace-nowrap font-['Liberation_Serif',serif] text-[10px] font-bold italic leading-none text-[#e0e0e0]">
          <span className="text-[13px]">f</span>(x)
        </span>
      </SI>
      <SI>
        <Sv w={18} h={18}>
          <rect x="1" y="1" width="8" height="4" {...s} />
          <rect x="8" y="8" width="9" height="4" {...s} />
          <rect x="8" y="13.500" width="9" height="4" {...s} />
          <path d="M4 5v10.500h4M4 10h4" {...s} />
        </Sv>
      </SI>
      <SI>
        <Sv w={18} h={14}>
          <path d="M4.500 12.500a3.500 3.500 0 0 1-.5-7 5 5 0 0 1 9.500-1 4 4 0 0 1 0 8z" {...s} />
          <path d="M9 11V6M7 8l2-2 2 2" {...s} />
        </Sv>
      </SI>
      <SI>
        <Sv w={16} h={18}>
          <rect x="1" y="1" width="5.500" height="4.500" {...s} />
          <rect x="9.500" y="1" width="5.500" height="4.500" {...s} />
          <rect x="1" y="10" width="5.500" height="4.500" {...s} />
          <rect x="9.500" y="10" width="5.500" height="4.500" {...s} />
          <path d="M1 7.500h5.500M9.500 7.500H15M1 16.500h5.500M9.500 16.500H15" {...s} />
        </Sv>
      </SI>
    </div>
  );
}

const statusItems: { t: string; w: string; c: string }[] = [
  { t: "7100, 4100, 0", w: "w-[55px]", c: "text-[#d0d0d0]" },
  { t: "Standard", w: "w-[38px]", c: "text-[#d0d0d0]" },
  { t: "ISO-25", w: "w-[30px]", c: "text-[#d0d0d0]" },
  { t: "Drafting", w: "w-[33px]", c: "text-[#d0d0d0]" },
  { t: "SNAP", w: "w-[29px]", c: "text-[#5f6164]" },
  { t: "GRID", w: "w-[22px]", c: "text-[#5f6164]" },
  { t: "ORTHO", w: "w-[32px]", c: "text-[#5f6164]" },
  { t: "POLAR", w: "w-[29px]", c: "text-[#5f6164]" },
  { t: "ESNAP", w: "w-[30px]", c: "text-[#5f6164]" },
  { t: "STRACK", w: "w-[33px]", c: "text-[#5f6164]" },
  { t: "LWT", w: "w-[21px]", c: "text-[#5f6164]" },
  { t: "TILE", w: "w-[22px]", c: "font-bold text-white" },
  { t: "1:1", w: "w-[17px]", c: "text-[#d0d0d0]" },
  { t: "DUCS", w: "w-[25px]", c: "text-[#5f6164]" },
];

const statusActive: { t: string; w: string; i: string }[] = [
  { t: "DYN", w: "w-[20px]", i: "w-[17px]" },
  { t: "QUAD", w: "w-[25px]", i: "w-[22px]" },
  { t: "RT", w: "w-[15px]", i: "w-[12px]" },
  { t: "HKA", w: "w-[20px]", i: "w-[17px]" },
];

function StatusBar() {
  return (
    <div className="flex h-[15px] shrink-0 items-center bg-[#1b1c1e] text-[7.500px] leading-none">
      <span className="w-[548px] border-r border-[#55585b] pl-[2px] text-[#bdbdbd]">Ready</span>
      <span className="w-[63.500px]" />
      {statusItems.map((s) => (
        <span key={s.t} className={"flex h-[11px] items-center justify-center whitespace-nowrap border-r border-[#77797b] " + s.w + " " + s.c}>
          {s.t}
        </span>
      ))}
      {statusActive.map((s) => (
        <span key={s.t} className={"flex h-[11px] items-center justify-center border-r border-[#77797b] " + s.w}>
          <span className={"flex h-[11px] items-center justify-center bg-[#45484c] font-semibold text-white " + s.i}>{s.t}</span>
        </span>
      ))}
      <span className="flex h-[11px] w-[33px] items-center justify-center border-r border-[#77797b] text-[#5f6164]">LOCKUI</span>
      <span className="flex h-[11px] w-[21px] items-center justify-center border-r border-[#77797b] text-[#d0d0d0]">None</span>
      <span className="ml-[3px] h-0 w-0 border-x-[2.500px] border-t-[3px] border-x-transparent border-t-[#e0e0e0]" />
      <span className="ml-auto mr-[2px] mt-[6px] flex flex-col items-end gap-px">
        <i className="h-px w-px bg-[#c0c0c0]" />
        <i className="h-px w-[4px] bg-[#c0c0c0]" />
      </span>
    </div>
  );
}

export default function App() {
  return (
    <div className="flex h-[675px] w-[1200px] flex-col overflow-hidden bg-[#2d3033] font-['Noto_Sans','Open_Sans',sans-serif]">
      <div className="flex h-[18px] shrink-0 items-center bg-white pl-[2px]">
        <span className="flex h-[10px] w-[10px] items-center justify-center bg-[#3f7fd8]">
          <Sv w={7} h={6}>
            <path d="M.5 5.500 2.800 1l1.200 3L5 3l1.500 2.500" stroke="#fff" />
          </Sv>
        </span>
        <span className="ml-[5px] whitespace-nowrap text-[8.900px] leading-none text-[#3a3a3a]">BricsCAD Pro (NOT FOR RESALE License) - [Dummy_floor_plan.dwg]</span>
        <div className="ml-auto flex items-center">
          <svg width="9" height="9" viewBox="0 0 9 9" fill="none">
            <path d="M0 4.500h8" stroke="#333" />
          </svg>
          <svg width="9" height="9" viewBox="0 0 9 9" fill="none" className="ml-[28px]">
            <path d="M.5 2.500h6v6h-6zM2.500 2.500v-2h6v6h-2" stroke="#333" />
          </svg>
          <svg width="9" height="9" viewBox="0 0 9 9" fill="none" className="ml-[27px] mr-[15px]">
            <path d="m.5.5 8 8M8.500.5l-8 8" stroke="#333" />
          </svg>
        </div>
      </div>
      <Toolbar />
      <TabBar />
      <Ribbon />
      <div className="flex min-h-0 flex-1">
        <div className="flex min-w-0 flex-1 flex-col">
          <DocTabs />
          <div className="flex min-h-0 flex-1">
            <div className="flex min-w-0 flex-1 flex-col">
              <Canvas />
              <LayoutTabs />
            </div>
            <Library />
          </div>
          <Command />
        </div>
        <RightStrip />
      </div>
      <StatusBar />
    </div>
  );
}
